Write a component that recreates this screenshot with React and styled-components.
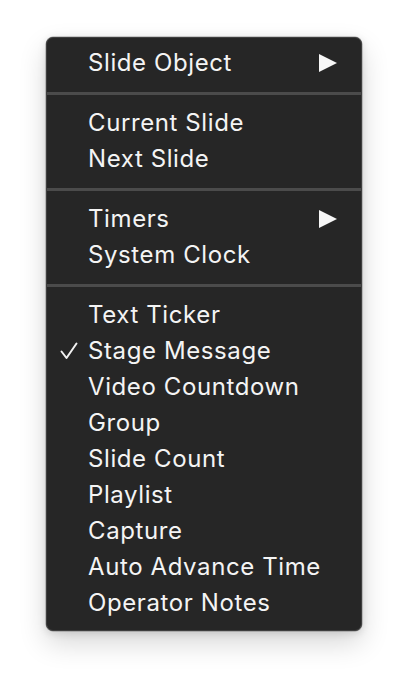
import styled, { createGlobalStyle } from "styled-components";

const GlobalStyle = createGlobalStyle`
  html, body {
    margin: 0;
    padding: 0;
    background: #ffffff;
  }
  body {
    font-family: Inter, "Noto Sans", sans-serif;
  }
`;

const sections = [
  [{ label: "Slide Object", submenu: true }],
  [{ label: "Current Slide" }, { label: "Next Slide" }],
  [{ label: "Timers", submenu: true }, { label: "System Clock" }],
  [
    { label: "Text Ticker" },
    { label: "Stage Message", checked: true },
    { label: "Video Countdown" },
    { label: "Group" },
    { label: "Slide Count" },
    { label: "Playlist" },
    { label: "Capture" },
    { label: "Auto Advance Time" },
    { label: "Operator Notes" },
  ],
];

const App = () => {
  return (
    <>
      <GlobalStyle />
      <Page>
        <Menu>
          {sections.map((items, si) => (
            <Section key={si}>
              {si > 0 && <Separator />}
              {items.map(({ label, submenu, checked }) => (
                <Item key={label}>
                  <CheckSlot>
                    {checked && (
                      <svg width="18" height="18" viewBox="0 0 18 18">
                        <path
                          d="M1.5 9.5 L6.5 16 L16.5 1.5"
                          fill="none"
                          stroke="#f2f2f2"
                          strokeWidth="2"
                          strokeLinecap="round"
                          strokeLinejoin="round"
                        />
                      </svg>
                    )}
                  </CheckSlot>
                  <Label>{label}</Label>
                  {submenu && (
                    <Arrow width="18" height="18" viewBox="0 0 18 18">
                      <path d="M0 0 L18 9 L0 18 Z" fill="#f7f7f7" />
                    </Arrow>
                  )}
                </Item>
              ))}
            </Section>
          ))}
        </Menu>
      </Page>
    </>
  );
};

const Page = styled.div`
  padding: 37px 46px 54px 46px;
  width: 316px;
`;

const Menu = styled.div`
  width: 316px;
  box-sizing: border-box;
  background: #262626;
  border: 1px solid #3f3f3f;
  border-radius: 7px;
  padding: 7px 0 9px;
  box-shadow: 0 0 0 0.5px rgba(0, 0, 0, 0.35), 0 12px 28px rgba(0, 0, 0, 0.16),
    0 2px 8px rgba(0, 0, 0, 0.12);
`;

const Section = styled.div`
  display: flex;
  flex-direction: column;
`;

const Separator = styled.div`
  height: 3px;
  margin: 11px 0 10px;
  background: #4b4b4b;
`;

const Item = styled.div`
  display: flex;
  align-items: center;
  height: 36px;
  padding: 0 24px 0 11px;
  color: #f4f4f4;
`;

const CheckSlot = styled.div`
  width: 30px;
  display: flex;
  align-items: center;
  padding-left: 2px;
  box-sizing: border-box;
`;

const Label = styled.span`
  flex: 1;
  font-size: 24px;
  letter-spacing: 0.6px;
  line-height: 36px;
  white-space: nowrap;
`;

const Arrow = styled.svg`
  display: block;
`;

export default App;
